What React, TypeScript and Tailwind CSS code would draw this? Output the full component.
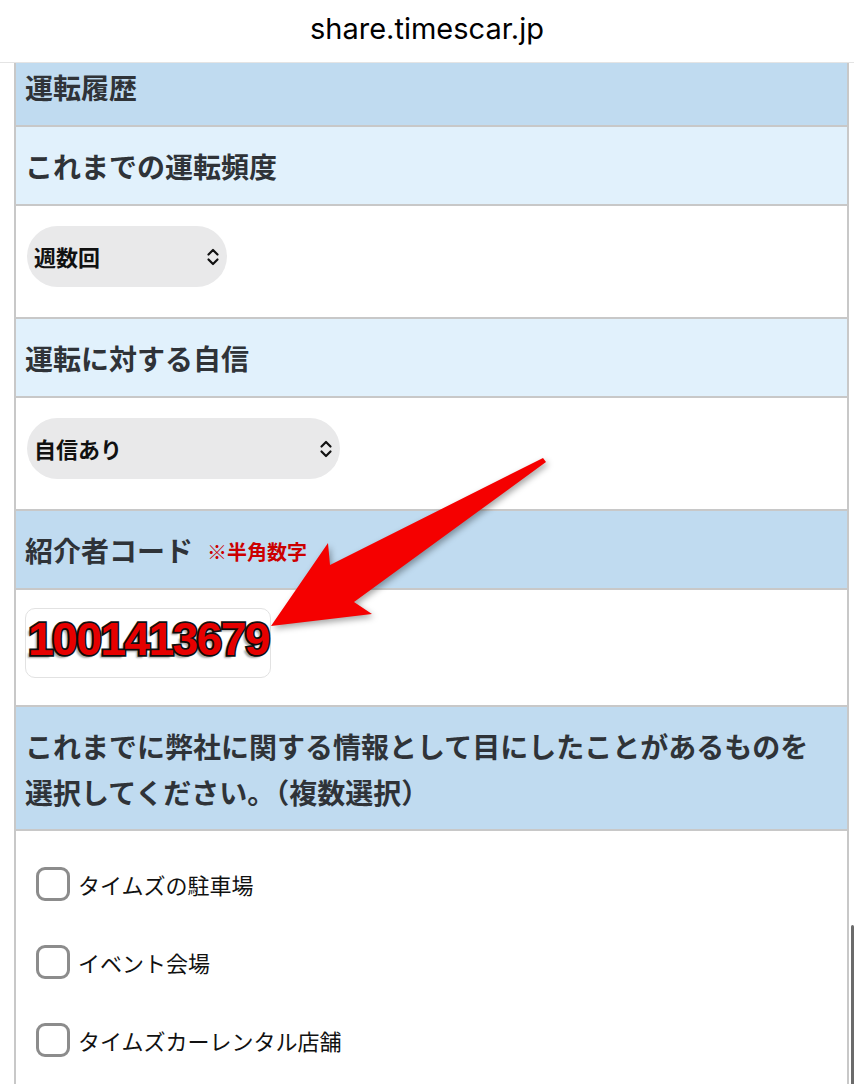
import React from "react";

const jp = "font-['Noto_Sans_CJK_JP','Noto_Sans',sans-serif]";

function Chevrons() {
  return (
    <svg width="14" height="20" viewBox="0 0 14 20" fill="none" stroke="#111" strokeWidth="2.2" strokeLinecap="round" strokeLinejoin="round">
      <path d="M2.5 7.5 L7 3 L11.5 7.5" />
      <path d="M2.5 12.5 L7 17 L11.5 12.5" />
    </svg>
  );
}

function Select({ label, width }: { label: string; width: string }) {
  return (
    <div className={`ml-[11px] h-[61px] ${width} rounded-full bg-[#e9e9ea] flex items-center justify-between pl-[7px] pr-[7px]`}>
      <span className={`${jp} text-[22px] font-semibold text-[#111]`}>{label}</span>
      <Chevrons />
    </div>
  );
}

function Checkbox({ label }: { label: string }) {
  return (
    <div className="flex items-center h-[78px] pl-[20px]">
      <div className="w-[34px] h-[34px] rounded-[9px] border-[3px] border-[#8c8c8c] bg-white" />
      <span className={`${jp} ml-[8px] text-[22px] text-[#111]`}>{label}</span>
    </div>
  );
}

export default function App() {
  return (
    <div className="relative w-[854px] h-[1084px] overflow-hidden bg-white">
      <div className="h-[63px] flex items-center justify-center border-b border-[#e4e4e4]">
        <span className="font-['Inter','Liberation_Sans',sans-serif] text-[29px] text-black pb-[4px]">share.timescar.jp</span>
      </div>
      <div className="ml-[14px] mr-[5px] border-x-2 border-[#c8c8c8]">
        <div className="h-[64px] bg-[#c0dbf0] border-b-2 border-[#c8c8c8] pl-[9px] pt-[4px]">
          <span className={`${jp} text-[28px] font-bold text-[#2f3338] leading-[40px]`}>運転履歴</span>
        </div>
        <div className="h-[79px] bg-[#e1f1fc] border-b-2 border-[#c8c8c8] pl-[9px] flex items-center">
          <span className={`${jp} text-[28px] font-bold text-[#2f3338]`}>これまでの運転頻度</span>
        </div>
        <div className="h-[113px] border-b-2 border-[#c8c8c8] pt-[20px]">
          <Select label="週数回" width="w-[200px]" />
        </div>
        <div className="h-[79px] bg-[#e1f1fc] border-b-2 border-[#c8c8c8] pl-[9px] flex items-center">
          <span className={`${jp} text-[28px] font-bold text-[#2f3338]`}>運転に対する自信</span>
        </div>
        <div className="h-[113px] border-b-2 border-[#c8c8c8] pt-[20px]">
          <Select label="自信あり" width="w-[313px]" />
        </div>
        <div className="h-[79px] bg-[#c0dbf0] border-b-2 border-[#c8c8c8] pl-[9px] flex items-center">
          <span className={`${jp} text-[28px] font-bold text-[#2f3338]`}>紹介者コード</span>
          <span className={`${jp} ml-[14px] text-[20px] font-bold text-[#cc0000] mt-[4px]`}>※半角数字</span>
        </div>
        <div className="h-[117px] border-b-2 border-[#c8c8c8] pt-[18px] pl-[9px]">
          <div className="w-[246px] h-[70px] rounded-[10px] border border-[#e2e2e2] flex items-start pt-[5px] pl-[2px]">
            <span className="font-['Liberation_Sans',sans-serif] text-[46px] font-bold tracking-[-1.5px] leading-[50px] text-[#e60000] [-webkit-text-stroke:3.5px_#111] [paint-order:stroke_fill] [text-shadow:-3px_3px_2px_rgba(0,0,0,0.35)]">
              1001413679
            </span>
          </div>
        </div>
        <div className="h-[124px] bg-[#c0dbf0] border-b-2 border-[#c8c8c8] pl-[9px] pr-[10px] pt-[16px]">
          <p className={`${jp} text-[28px] font-bold text-[#2f3338] leading-[46px]`}>
            これまでに弊社に関する情報として目にしたことがあるものを
            <br />
            選択してください。（複数選択）
          </p>
        </div>
        <div className="pt-[14px] h-[400px]">
          <Checkbox label="タイムズの駐車場" />
          <Checkbox label="イベント会場" />
          <Checkbox label="タイムズカーレンタル店舗" />
        </div>
      </div>

      <div className="absolute right-0 top-[925px] w-[3px] h-[170px] rounded-full bg-[#6b6b6b]" />

      <svg
        className="absolute left-0 top-0 pointer-events-none"
        width="854"
        height="1084"
        viewBox="0 0 854 1084"
        style={{ filter: "drop-shadow(2px 3px 3px rgba(0,0,0,0.35))" }}
      >
        <polygon
          points="543,458 330,565 328,543 271,626 372,614 354,602 546,462"
          fill="#f50000"
        />
      </svg>
    </div>
  );
}
